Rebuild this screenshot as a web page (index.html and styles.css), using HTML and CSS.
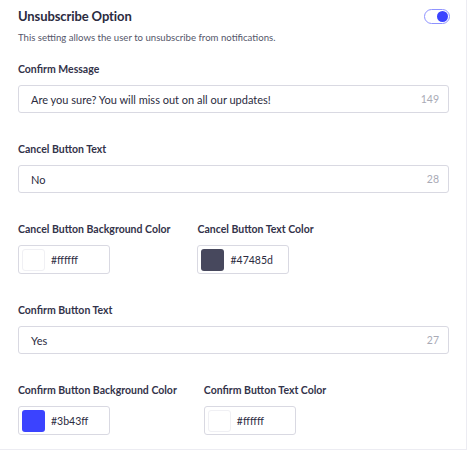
FILE: index.html
```html
<!DOCTYPE html>
<html lang="en">
<head>
<meta charset="utf-8">
<title>Unsubscribe Option</title>
<link rel="stylesheet" href="styles.css">
</head>
<body>
<div class="card">
  <div class="header">
    <h2 class="title">Unsubscribe Option</h2>
    <span class="toggle"><span class="knob"></span></span>
  </div>
  <p class="desc">This setting allows the user to unsubscribe from notifications.</p>

  <div class="field">
    <label class="label">Confirm Message</label>
    <div class="input"><span class="value">Are you sure? You will miss out on all our updates!</span><span class="count">149</span></div>
  </div>

  <div class="field">
    <label class="label">Cancel Button Text</label>
    <div class="input"><span class="value">No</span><span class="count">28</span></div>
  </div>

  <div class="row">
    <div class="field">
      <label class="label">Cancel Button Background Color</label>
      <div class="color"><span class="swatch swatch-white"></span><span class="hex">#ffffff</span></div>
    </div>
    <div class="field">
      <label class="label">Cancel Button Text Color</label>
      <div class="color"><span class="swatch swatch-dark"></span><span class="hex">#47485d</span></div>
    </div>
  </div>

  <div class="field">
    <label class="label">Confirm Button Text</label>
    <div class="input"><span class="value">Yes</span><span class="count">27</span></div>
  </div>

  <div class="row">
    <div class="field">
      <label class="label">Confirm Button Background Color</label>
      <div class="color"><span class="swatch swatch-blue"></span><span class="hex">#3b43ff</span></div>
    </div>
    <div class="field">
      <label class="label">Confirm Button Text Color</label>
      <div class="color"><span class="swatch swatch-white"></span><span class="hex">#ffffff</span></div>
    </div>
  </div>
</div>
</body>
</html>
```
FILE: styles.css
```css
* { box-sizing: border-box; }
html, body { margin: 0; padding: 0; background: #fff; }
body {
  font-family: Lato, "Noto Sans", sans-serif;
  color: #2d2d44;
}
.card {
  width: 467px;
  height: 450px;
  border-right: 1px solid #ececf2;
  border-bottom: 1px solid #ececf2;
  padding: 6px 17px 0 18px;
}
.header {
  display: flex;
  align-items: center;
  justify-content: space-between;
  height: 20px;
}
.title {
  margin: 0;
  font-size: 13px;
  font-weight: 700;
  line-height: 20px;
  letter-spacing: -0.1px;
  color: #2b2b40;
}
.toggle {
  display: flex;
  align-items: center;
  justify-content: flex-end;
  width: 26px;
  height: 15px;
  border: 1px solid #8f93ff;
  border-radius: 8px;
  padding: 1px;
  margin-right: -1px;
}
.knob {
  width: 11px;
  height: 11px;
  border-radius: 50%;
  background: #3b43ff;
}
.desc {
  margin: 5px 0 0;
  font-size: 9.6px;
  line-height: 14px;
  color: #55566a;
}
.field { margin-top: 17px; }
.field + .field, .row, .row + .field { margin-top: 29px; }
.row .field { margin-top: 0; }
.label {
  display: block;
  font-size: 10.5px;
  font-weight: 700;
  line-height: 14px;
  color: #33334a;
  margin-bottom: 9px;
}
.input {
  display: flex;
  align-items: center;
  justify-content: space-between;
  height: 28px;
  border: 1px solid #d9d9e2;
  border-radius: 3px;
  padding: 0 9px 0 12px;
}
.value {
  font-size: 11px;
  color: #2b2b40;
}
.count {
  font-size: 10.5px;
  color: #a9aab6;
}
.row {
  display: flex;
  gap: 27px;
}
.color {
  display: flex;
  align-items: center;
  width: 92px;
  height: 29px;
  border: 1px solid #d9d9e2;
  border-radius: 3px;
  padding: 0 0 0 3px;
}
.swatch {
  width: 23px;
  height: 22px;
  border-radius: 3px;
  margin-right: 6px;
}
.swatch-white { background: #fff; border: 1px solid #f0f0f4; }
.swatch-dark { background: #47485d; }
.swatch-blue { background: #3b43ff; }
.hex {
  font-size: 10.5px;
  color: #2b2b40;
}
```
